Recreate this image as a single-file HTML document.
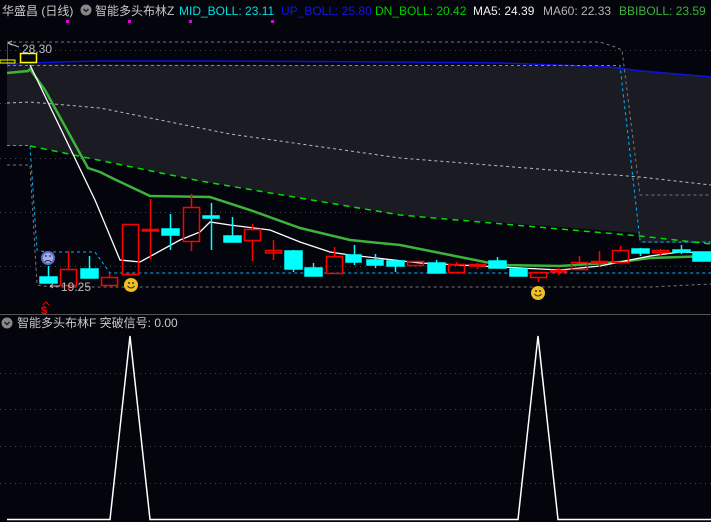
<!DOCTYPE html>
<html><head><meta charset="utf-8"><style>
html,body{margin:0;padding:0;background:#04040c;width:711px;height:522px;overflow:hidden}
svg{display:block}
text{font-family:"Liberation Sans","Noto Sans CJK SC",sans-serif;font-size:12px}
</style></head><body>
<svg width="711" height="522" viewBox="0 0 711 522" xmlns="http://www.w3.org/2000/svg">
<rect width="711" height="522" fill="#04040c"/>
<text x="2" y="15" fill="#c8c8c8">华盛昌 (日线)</text>
<circle cx="86" cy="10" r="5.5" fill="#888"/>
<path d="M83.5 9 L86 11.5 L88.5 9" stroke="#222" stroke-width="1.5" fill="none"/>
<text x="95" y="15" fill="#c8c8c8">智能多头布林Z</text>
<text x="179" y="15" fill="#00e0e0">MID_BOLL: 23.11</text>
<text x="281" y="15" fill="#1414e6">UP_BOLL: 25.80</text>
<text x="375" y="15" fill="#00cc00">DN_BOLL: 20.42</text>
<text x="473" y="15" fill="#f0f0f0">MA5: 24.39</text>
<text x="543" y="15" fill="#b4b4b4">MA60: 22.33</text>
<text x="619" y="15" fill="#3cb43c">BBIBOLL: 23.59</text>
<g fill="#e000e0"><rect x="66" y="20" width="3" height="3"/><rect x="128" y="20" width="3" height="3"/><rect x="189" y="20" width="3" height="3"/><rect x="271" y="20" width="3" height="3"/></g>
<g stroke="#444" stroke-dasharray="1,4" stroke-width="1">
<line x1="0" y1="50.5" x2="711" y2="50.5"/><line x1="0" y1="103.5" x2="711" y2="103.5"/><line x1="0" y1="158.5" x2="711" y2="158.5"/><line x1="0" y1="212.5" x2="711" y2="212.5"/><line x1="0" y1="266.5" x2="711" y2="266.5"/>
<line x1="0" y1="373.5" x2="711" y2="373.5"/><line x1="0" y1="409.5" x2="711" y2="409.5"/><line x1="0" y1="446.5" x2="711" y2="446.5"/><line x1="0" y1="483.5" x2="711" y2="483.5"/>
</g>
<polygon points="7,64 610,66 640,70 711,76 711,243 640,243 638,233 400,215 200,181 30,146 7,146" fill="#1b1b24"/>
<polyline points="7,64 60,62 100,61 200,61 400,62 500,63 610,67 640,71 711,77" stroke="#1010e0" stroke-width="1.5" fill="none"/>
<g stroke="#777" stroke-dasharray="3,3" fill="none" stroke-width="1">
<polyline points="7,42 600,42 615,47 622,50 640,195 711,195"/>
<polyline points="7,165 30,165 37,285 50,287 650,287 711,284"/>
<polyline points="7,103 30,102 100,108 230,134 400,158 640,177 711,185" stroke="#bbb"/>
</g>
<g stroke="#00b4ff" stroke-dasharray="3,3" fill="none" stroke-width="1">
<polyline points="7,65.5 620,65.5 640,240 642,242 711,242"/>
<polyline points="7,145.5 30,145.5 37,250 46,252 95,252 110,273 711,273"/>
</g>
<polyline points="30,146 200,181 400,215 640,236 711,244" stroke="#00e000" stroke-width="1.5" stroke-dasharray="6,5" fill="none"/>
<polyline points="7,73 28,71 30,69 45,90 88,168 100,172 112,178 150,196 210,197 250,210 300,228 350,240 400,245 450,255 500,265 560,266 620,262 650,258 711,256" stroke="#3cb43c" stroke-width="2.5" fill="none"/>
<polyline points="30,65 95,200 120,260 140,262 180,240 200,232 210,222 230,225 270,230 300,242 330,252 350,255 420,263 480,266 520,268 560,270 600,266 620,262 650,256 680,252 711,253" stroke="#fff" stroke-width="1.3" fill="none"/>
<line x1="7.5" y1="43" x2="7.5" y2="67" stroke="#f00"/>
<rect x="0" y="60" width="15" height="3" fill="none" stroke="#ff0" stroke-width="1"/>
<rect x="20.5" y="53.5" width="16" height="9" fill="none" stroke="#ff0" stroke-width="1.5"/>
<path d="M8 43 L12 41 M8 43 L12 45 M8 43 L19 47" stroke="#bbb" fill="none"/>
<text x="22" y="53" fill="#bbb">28.30</text>
<g stroke-width="1.5">
<g stroke="#00ffff" fill="#00ffff">
<line x1="48.5" y1="266" x2="48.5" y2="283"/><rect x="40" y="277" width="17" height="6"/>
<line x1="89.5" y1="256" x2="89.5" y2="278"/><rect x="81" y="269" width="17" height="9"/>
<line x1="170.5" y1="214" x2="170.5" y2="250"/><rect x="162" y="229" width="17" height="6"/>
<line x1="211.5" y1="203" x2="211.5" y2="250"/><rect x="203" y="216" width="16" height="2"/>
<line x1="232.5" y1="217" x2="232.5" y2="242"/><rect x="224" y="236" width="17" height="6"/>
<line x1="293.5" y1="250" x2="293.5" y2="272"/><rect x="285" y="251" width="17" height="18"/>
<line x1="313.5" y1="263" x2="313.5" y2="276"/><rect x="305" y="268" width="17" height="8"/>
<line x1="354.5" y1="245" x2="354.5" y2="265"/><rect x="346" y="255" width="15" height="7"/>
<line x1="375.5" y1="254" x2="375.5" y2="268"/><rect x="367" y="260" width="16" height="5"/>
<line x1="395.5" y1="261" x2="395.5" y2="272"/><rect x="387" y="261" width="17" height="5"/>
<line x1="436.5" y1="260" x2="436.5" y2="273"/><rect x="428" y="263" width="17" height="10"/>
<line x1="497.5" y1="257" x2="497.5" y2="268"/><rect x="489" y="261" width="17" height="7"/>
<rect x="510" y="269" width="17" height="7"/>
<line x1="640.5" y1="248" x2="640.5" y2="256"/><rect x="632" y="249" width="17" height="4"/>
<line x1="681.5" y1="245" x2="681.5" y2="254"/><rect x="673" y="250" width="17" height="2"/>
<rect x="693" y="252" width="18" height="9"/>
</g>
<g stroke="#f00" fill="none">
<line x1="68.5" y1="251" x2="68.5" y2="269"/><line x1="68.5" y1="286" x2="68.5" y2="290"/><rect x="60.5" y="269.5" width="16" height="16"/>
<line x1="109.5" y1="273" x2="109.5" y2="277"/><rect x="101.5" y="277.5" width="16" height="8"/>
<rect x="122.5" y="224.5" width="16" height="50"/>
<line x1="150.5" y1="199" x2="150.5" y2="259"/><rect x="142.5" y="229.5" width="16" height="1.5" fill="#f00"/>
<line x1="191.5" y1="194" x2="191.5" y2="207"/><line x1="191.5" y1="241" x2="191.5" y2="251"/><rect x="183.5" y="207.5" width="16" height="34"/>
<line x1="252.5" y1="224" x2="252.5" y2="229"/><line x1="252.5" y1="240" x2="252.5" y2="261"/><rect x="244.5" y="229.5" width="16" height="11"/>
<line x1="273.5" y1="240" x2="273.5" y2="260"/><rect x="265.5" y="250.5" width="16" height="2.5"/>
<line x1="334.5" y1="247" x2="334.5" y2="256"/><rect x="326.5" y="256.5" width="16" height="17"/>
<rect x="407.5" y="261.5" width="16" height="4"/>
<line x1="456.5" y1="262" x2="456.5" y2="264"/><rect x="448.5" y="264.5" width="16" height="8"/>
<line x1="477.5" y1="263" x2="477.5" y2="269"/><rect x="469.5" y="264.5" width="16" height="1.5" fill="#f00"/>
<line x1="538.5" y1="277" x2="538.5" y2="282"/><rect x="530.5" y="272.5" width="16" height="5"/>
<line x1="558.5" y1="268" x2="558.5" y2="275"/><rect x="550.5" y="270.5" width="16" height="1.5" fill="#f00"/>
<line x1="579.5" y1="256" x2="579.5" y2="262"/><rect x="571.5" y="262.5" width="16" height="7"/>
<line x1="599.5" y1="251" x2="599.5" y2="267"/><rect x="591.5" y="261.5" width="16" height="1.5" fill="#f00"/>
<line x1="620.5" y1="246" x2="620.5" y2="250"/><rect x="612.5" y="250.5" width="16" height="12"/>
<line x1="660.5" y1="249" x2="660.5" y2="256"/><rect x="652.5" y="250.5" width="16" height="2"/>
</g>
</g>
<circle cx="48" cy="258" r="7" fill="#6070c8"/><circle cx="48" cy="258" r="5" fill="#a0b0f0"/>
<path d="M44.5 262 Q48 259 51.5 262" stroke="#223" fill="none"/><circle cx="46" cy="256" r="0.9" fill="#223"/><circle cx="50" cy="256" r="0.9" fill="#223"/>
<g fill="#f0c020"><circle cx="131" cy="285" r="7"/><circle cx="538" cy="293" r="7"/></g>
<g stroke="#333" fill="none"><path d="M127.5 286 Q131 290 134.5 286"/><path d="M534.5 294 Q538 298 541.5 294"/></g>
<g fill="#333"><circle cx="129" cy="283" r="1"/><circle cx="133" cy="283" r="1"/><circle cx="536" cy="291" r="1"/><circle cx="540" cy="291" r="1"/></g>
<path d="M50 286 L53 284 M50 286 L53 288 M50 286 L60 286" stroke="#bbb" fill="none"/>
<text x="61" y="291" fill="#bbb">19.25</text>
<text x="41" y="314" fill="#f00" style="font-size:11px;font-weight:bold">$</text>
<path d="M43 305 L46 302 L49 305" stroke="#f00" fill="none"/>
<line x1="0" y1="314.5" x2="711" y2="314.5" stroke="#555"/>
<circle cx="7" cy="323" r="5.5" fill="#888"/>
<path d="M4.5 322 L7 324.5 L9.5 322" stroke="#222" stroke-width="1.5" fill="none"/>
<text x="17" y="327" fill="#c8c8c8">智能多头布林F 突破信号: 0.00</text>
<polyline points="7,519.5 110,519.5 130,336 150,519.5 518,519.5 538,336 558,519.5 711,519.5" stroke="#fff" stroke-width="1.5" fill="none"/>
</svg>
</body></html>
